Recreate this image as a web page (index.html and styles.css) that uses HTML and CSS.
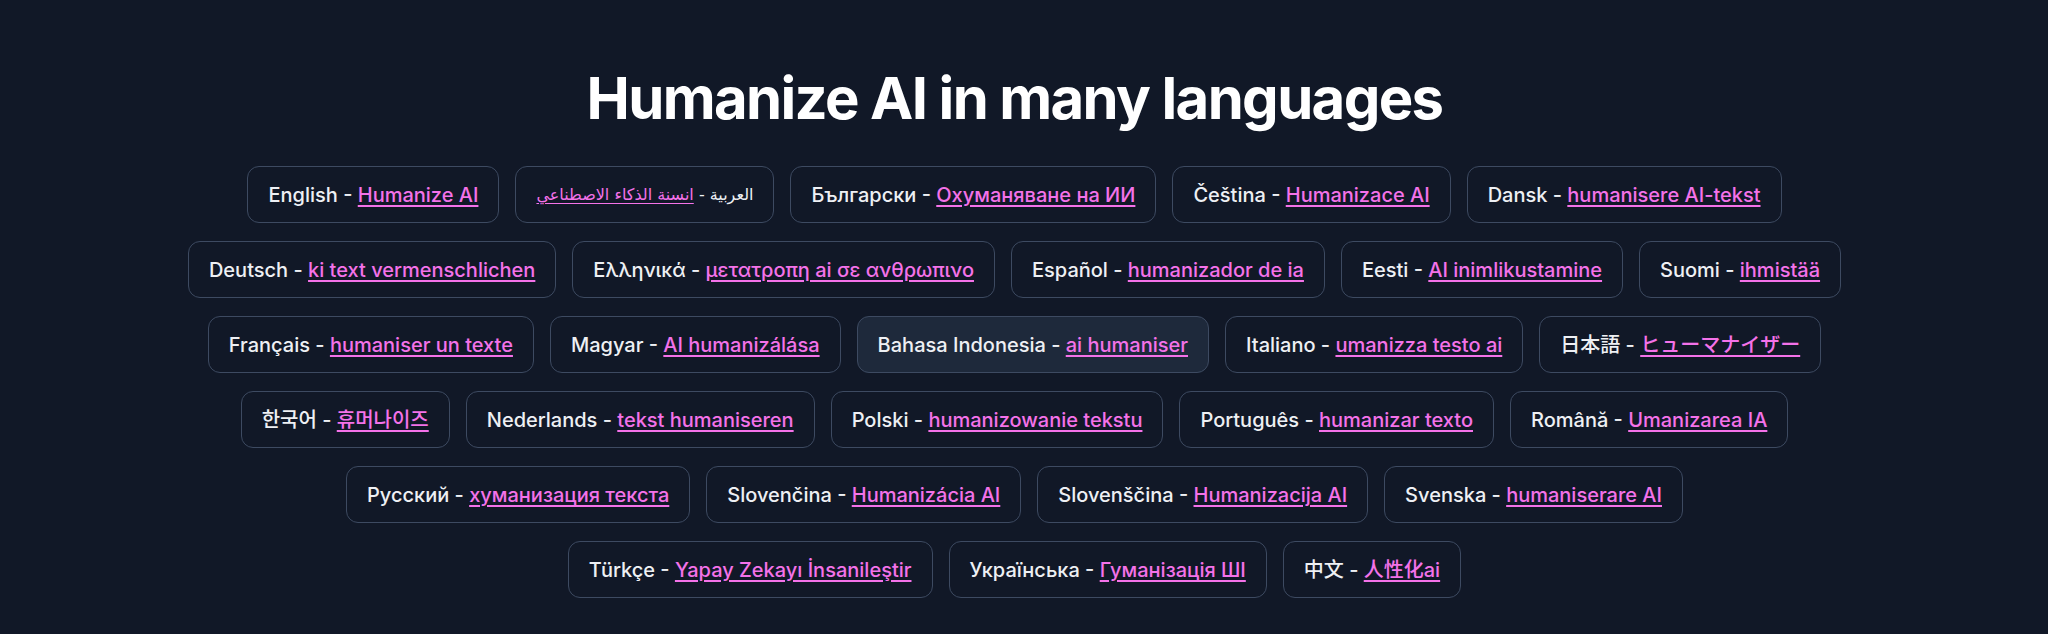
FILE: index.html
```html
<!DOCTYPE html>
<html lang="en">
<head>
<meta charset="utf-8">
<title>Humanize AI in many languages</title>
<link rel="stylesheet" href="styles.css">
</head>
<body>
<section class="langs">
  <h2 class="title">Humanize AI in many languages</h2>
  <div class="list">
    <div class="item">English - <a href="#">Humanize AI</a></div>
    <div class="item" dir="rtl" lang="ar">العربية - <a href="#">انسنة الذكاء الاصطناعي</a></div>
    <div class="item">Български - <a href="#">Охуманяване на ИИ</a></div>
    <div class="item">Čeština - <a href="#">Humanizace AI</a></div>
    <div class="item">Dansk - <a href="#">humanisere AI-tekst</a></div>
    <div class="item">Deutsch - <a href="#">ki text vermenschlichen</a></div>
    <div class="item">Ελληνικά - <a href="#">μετατροπη ai σε ανθρωπινο</a></div>
    <div class="item">Español - <a href="#">humanizador de ia</a></div>
    <div class="item">Eesti - <a href="#">AI inimlikustamine</a></div>
    <div class="item">Suomi - <a href="#">ihmistää</a></div>
    <div class="item">Français - <a href="#">humaniser un texte</a></div>
    <div class="item">Magyar - <a href="#">AI humanizálása</a></div>
    <div class="item active">Bahasa Indonesia - <a href="#">ai humaniser</a></div>
    <div class="item">Italiano - <a href="#">umanizza testo ai</a></div>
    <div class="item" lang="ja">日本語 - <a href="#">ヒューマナイザー</a></div>
    <div class="item" lang="ko">한국어 - <a href="#">휴머나이즈</a></div>
    <div class="item">Nederlands - <a href="#">tekst humaniseren</a></div>
    <div class="item">Polski - <a href="#">humanizowanie tekstu</a></div>
    <div class="item">Português - <a href="#">humanizar texto</a></div>
    <div class="item">Română - <a href="#">Umanizarea IA</a></div>
    <div class="item">Русский - <a href="#">хуманизация текста</a></div>
    <div class="item">Slovenčina - <a href="#">Humanizácia AI</a></div>
    <div class="item">Slovenščina - <a href="#">Humanizacija AI</a></div>
    <div class="item">Svenska - <a href="#">humaniserare AI</a></div>
    <div class="item">Türkçe - <a href="#">Yapay Zekayı İnsanileştir</a></div>
    <div class="item">Українська - <a href="#">Гуманізація ШІ</a></div>
    <div class="item" lang="zh">中文 - <a href="#">人性化ai</a></div>
  </div>
</section>
</body>
</html>
```

FILE: styles.css
```css
html, body {
  margin: 0;
  padding: 0;
  background: #111827;
}
body {
  font-family: Inter, "Noto Sans", "Noto Sans CJK JP", "Noto Sans CJK KR", "Noto Sans CJK SC", sans-serif;
  color: #e5e7eb;
  height: 634px;
  overflow: hidden;
}
.langs {
  padding: 69px 19px 0 0;
  display: flex;
  flex-direction: column;
  align-items: center;
}
.title {
  margin: 0 0 39px;
  font-size: 58px;
  line-height: 1;
  font-weight: 700;
  color: #ffffff;
  letter-spacing: -0.028em;
  text-align: center;
}
.list {
  max-width: 1690px;
  display: flex;
  flex-wrap: wrap;
  justify-content: center;
  row-gap: 18px;
  column-gap: 16px;
}
.item {
  padding: 14px 20px 13px;
  border: 1px solid #3d4a61;
  border-radius: 12px;
  background: #111827;
  font-size: 20px;
  line-height: 28px;
  font-weight: 500;
  color: #eef0f4;
  white-space: nowrap;
}
.item.active {
  background: #1e293b;
}
.item a {
  color: #f472e9;
  text-decoration: underline;
  text-underline-offset: 3px;
}
.item[lang="ar"] {
  font-family: "DejaVu Sans", sans-serif;
  font-size: 16px;
  font-weight: 400;
}
.item[lang="ja"], .item[lang="ja"] a { font-family: Inter, "Noto Sans CJK JP", sans-serif; }
.item[lang="ko"], .item[lang="ko"] a { font-family: Inter, "Noto Sans CJK KR", sans-serif; }
.item[lang="zh"], .item[lang="zh"] a { font-family: Inter, "Noto Sans CJK SC", sans-serif; }
```
